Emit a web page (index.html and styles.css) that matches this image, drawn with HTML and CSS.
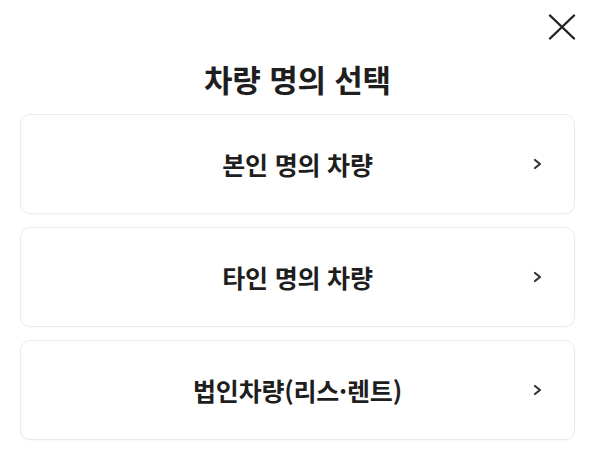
FILE: index.html
```html
<!DOCTYPE html>
<html lang="ko">
<head>
<meta charset="utf-8">
<link rel="stylesheet" href="styles.css">
</head>
<body>
<div class="sheet">
  <div class="top">
    <button class="close" aria-label="닫기">
      <svg width="28" height="26" viewBox="0 0 28 26"><path d="M2 1.5 L26 24.5 M26 1.5 L2 24.5" stroke="#222" stroke-width="2.4" stroke-linecap="round" fill="none"/></svg>
    </button>
  </div>
  <h1 class="title">차량 명의 선택</h1>
  <div class="list">
    <div class="card"><span class="label">본인 명의 차량</span><span class="chev"><svg width="10" height="12" viewBox="0 0 10 12"><path d="M2 2 L7 6 L2 10" stroke="#333" stroke-width="2.2" fill="none" stroke-linecap="round" stroke-linejoin="round"/></svg></span></div>
    <div class="card"><span class="label">타인 명의 차량</span><span class="chev"><svg width="10" height="12" viewBox="0 0 10 12"><path d="M2 2 L7 6 L2 10" stroke="#333" stroke-width="2.2" fill="none" stroke-linecap="round" stroke-linejoin="round"/></svg></span></div>
    <div class="card"><span class="label">법인차량(리스·렌트)</span><span class="chev"><svg width="10" height="12" viewBox="0 0 10 12"><path d="M2 2 L7 6 L2 10" stroke="#333" stroke-width="2.2" fill="none" stroke-linecap="round" stroke-linejoin="round"/></svg></span></div>
  </div>
</div>
</body>
</html>
```
FILE: styles.css
```css
* { box-sizing: border-box; }
html, body { margin: 0; padding: 0; background: #fff; }
body {
  font-family: "Noto Sans CJK KR", "Noto Sans", sans-serif;
  color: #222;
  width: 598px;
  height: 451px;
  overflow: hidden;
}
.sheet { padding: 0 23px 0 20px; }
.top {
  display: flex;
  justify-content: flex-end;
  padding-top: 14px;
  height: 57px;
}
.close {
  border: 0;
  background: none;
  padding: 0;
  margin-right: -1px;
  width: 28px;
  height: 26px;
  display: flex;
}
.title {
  margin: 0;
  text-align: center;
  font-size: 31px;
  font-weight: 700;
  line-height: 44px;
  height: 57px;
  letter-spacing: -0.2px;
  color: #1e1e1e;
}
.list { display: flex; flex-direction: column; gap: 13px; }
.card {
  position: relative;
  height: 100px;
  border: 1.5px solid #ebebeb;
  border-radius: 10px;
  display: flex;
  align-items: center;
  justify-content: center;
  box-shadow: 0 1px 2px rgba(0,0,0,0.03);
}
.label {
  font-size: 25px;
  font-weight: 700;
  color: #1e1e1e;
  letter-spacing: -0.2px;
}
.chev {
  position: absolute;
  right: 31px;
  top: 50%;
  transform: translateY(-50%);
  display: flex;
}
```
